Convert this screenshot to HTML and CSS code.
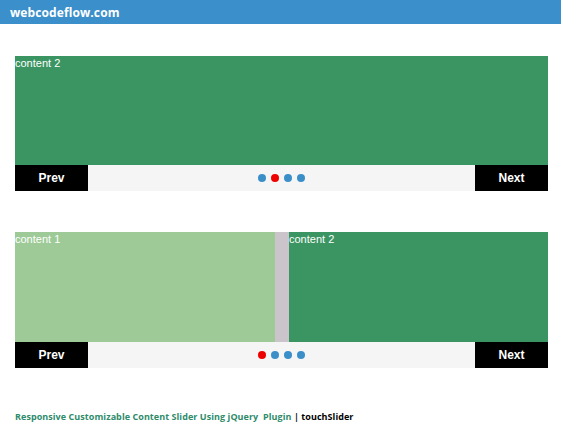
FILE: index.html
```html
<!DOCTYPE html>
<html>
<head>
<meta charset="utf-8">
<link rel="stylesheet" href="styles.css">
</head>
<body>
<header class="topbar"><span class="brand">webcodeflow.com</span></header>
<main class="wrap">
  <section class="slider first">
    <div class="stage">
      <div class="slide dark full">content 2</div>
    </div>
    <div class="nav">
      <button class="btn">Prev</button>
      <div class="dots"><span class="dot"></span><span class="dot on"></span><span class="dot"></span><span class="dot"></span></div>
      <button class="btn">Next</button>
    </div>
  </section>
  <section class="slider second">
    <div class="stage">
      <div class="slide light left">content 1</div>
      <div class="gap"></div>
      <div class="slide dark right">content 2</div>
    </div>
    <div class="nav">
      <button class="btn">Prev</button>
      <div class="dots"><span class="dot on"></span><span class="dot"></span><span class="dot"></span><span class="dot"></span></div>
      <button class="btn">Next</button>
    </div>
  </section>
  <p class="credit"><span class="green">Responsive Customizable Content Slider Using jQuery&nbsp; Plugin</span> <span class="sep">|</span> <span class="black">touchSlider</span></p>
</main>
</body>
</html>
```
FILE: styles.css
```css
html, body { margin: 0; padding: 0; background: #fff; }
body { font-family: "Liberation Sans", Arial, sans-serif; }
.topbar {
  height: 24px;
  background: #3b8fca;
  display: flex;
  align-items: center;
  padding-left: 10px;
}
.brand {
  color: #fff;
  font-family: "Open Sans", "Liberation Sans", sans-serif;
  font-weight: 700;
  font-size: 12px;
  letter-spacing: 0.1px;
}
.wrap { padding: 32px 13px 0 15px; }
.slider { width: 533px; }
.second { margin-top: 41px; }
.stage { height: 109px; display: flex; }
.second .stage { height: 110px; }
.slide {
  color: #fff;
  font-size: 11px;
  line-height: 12px;
  padding-top: 1px;
  box-sizing: border-box;
}
.dark { background: #3a9562; }
.light { background: #9dca96; }
.full { flex: 1; }
.left { width: 260px; }
.gap { width: 14px; background: #cbc4ca; }
.right { flex: 1; }
.nav {
  height: 26px;
  background: #f5f5f5;
  display: flex;
  justify-content: space-between;
  align-items: center;
}
.btn {
  width: 73px;
  height: 26px;
  background: #000;
  color: #fff;
  border: 0;
  padding: 0;
  font-family: "Liberation Sans", Arial, sans-serif;
  font-weight: 700;
  font-size: 12px;
}
.dots { display: flex; gap: 5px; }
.dot { width: 8px; height: 8px; border-radius: 50%; background: #3a8fc8; }
.dot.on { background: #ee0000; }
.credit {
  margin: 42px 0 0 0;
  font-family: "Open Sans", "Liberation Sans", sans-serif;
  font-weight: 700;
  font-size: 9px;
  letter-spacing: 0.06px;
}
.green { color: #2e8b6b; }
.sep { color: #222; }
.black { color: #000; }
```
